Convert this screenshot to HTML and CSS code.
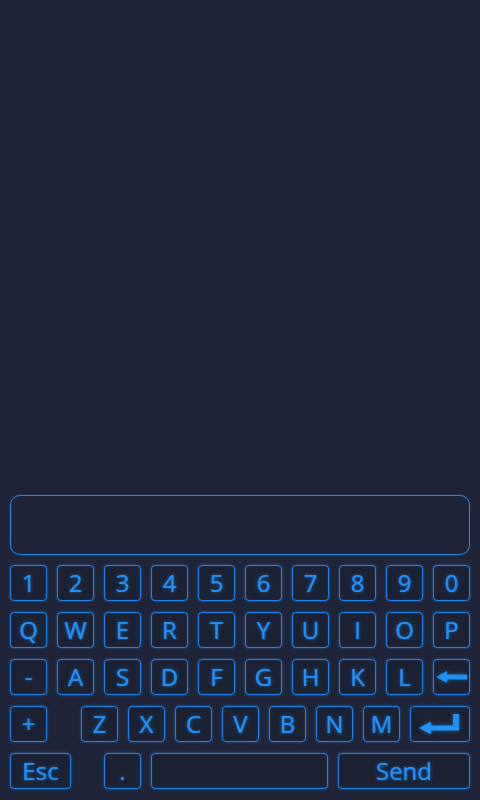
FILE: index.html
```html
<!DOCTYPE html>
<html>
<head>
<meta charset="utf-8">
<link rel="stylesheet" href="styles.css">
</head>
<body>
<div class="app">
  <div class="input"></div>
  <div class="keys">
    <div class="row">
      <div class="key">1</div><div class="key">2</div><div class="key">3</div><div class="key">4</div><div class="key">5</div>
      <div class="key">6</div><div class="key">7</div><div class="key">8</div><div class="key">9</div><div class="key">0</div>
    </div>
    <div class="row">
      <div class="key">Q</div><div class="key">W</div><div class="key">E</div><div class="key">R</div><div class="key">T</div>
      <div class="key">Y</div><div class="key">U</div><div class="key">I</div><div class="key">O</div><div class="key">P</div>
    </div>
    <div class="row">
      <div class="key">-</div><div class="key">A</div><div class="key">S</div><div class="key">D</div><div class="key">F</div>
      <div class="key">G</div><div class="key">H</div><div class="key">K</div><div class="key">L</div>
      <div class="key"><svg width="32" height="12" viewBox="0 0 32 12"><path d="M0 6 L11 0 L11 3.5 L31 3.5 L31 8.5 L11 8.5 L11 12 Z" fill="currentColor"/></svg></div>
    </div>
    <div class="row">
      <div class="key plus">+</div>
      <div class="key">Z</div><div class="key">X</div><div class="key">C</div><div class="key">V</div>
      <div class="key">B</div><div class="key">N</div><div class="key">M</div>
      <div class="key enter"><svg width="42" height="21" viewBox="0 0 42 21"><path d="M0 14 L12 7.5 L12 11.5 L34 11.5 L34 0 L40 0 L40 16.5 L12 16.5 L12 20.5 Z" fill="currentColor"/></svg></div>
    </div>
    <div class="row">
      <div class="key esc">Esc</div>
      <div class="key dot">.</div>
      <div class="key space"></div>
      <div class="key send">Send</div>
    </div>
  </div>
</div>
</body>
</html>
```
FILE: styles.css
```css
html, body {
  margin: 0;
  padding: 0;
  background: #1f2436;
}
.app {
  height: 800px;
  box-sizing: border-box;
  display: flex;
  flex-direction: column;
  justify-content: flex-end;
  padding: 0 10px 11px;
  font-family: "Open Sans", "Noto Sans", sans-serif;
}
.input {
  height: 60px;
  box-sizing: border-box;
  border: 1px solid #2588e6;
  border-radius: 10px;
  margin-bottom: 10px;
  box-shadow: 0 0 2px rgba(30, 130, 240, 0.4);
}
.keys {
  display: flex;
  flex-direction: column;
  gap: 11px;
}
.row {
  display: flex;
  gap: 10px;
  height: 36px;
}
.key {
  width: 37px;
  height: 36px;
  box-sizing: border-box;
  border: 1px solid #1c82ea;
  border-radius: 4px;
  box-shadow: 0 0 3px rgba(30, 130, 240, 0.6), inset 0 0 2px rgba(30, 130, 240, 0.25);
  background: #1d2233;
  color: #2090f5;
  font-size: 24px;
  font-weight: 400;
  line-height: 34px;
  text-align: center;
  display: flex;
  align-items: center;
  justify-content: center;
  text-shadow: 0 0 1px rgba(32, 144, 245, 0.9), 0 0 4px rgba(30, 140, 242, 0.5);
}
.key svg {
  display: block;
  filter: drop-shadow(0 0 2px rgba(30, 140, 242, 0.5));
}
.plus {
  margin-right: 24px;
}
.enter {
  width: 60px;
}
.esc {
  width: 61px;
  margin-right: 23px;
}
.space {
  width: 177px;
}
.send {
  width: 132px;
}
```
